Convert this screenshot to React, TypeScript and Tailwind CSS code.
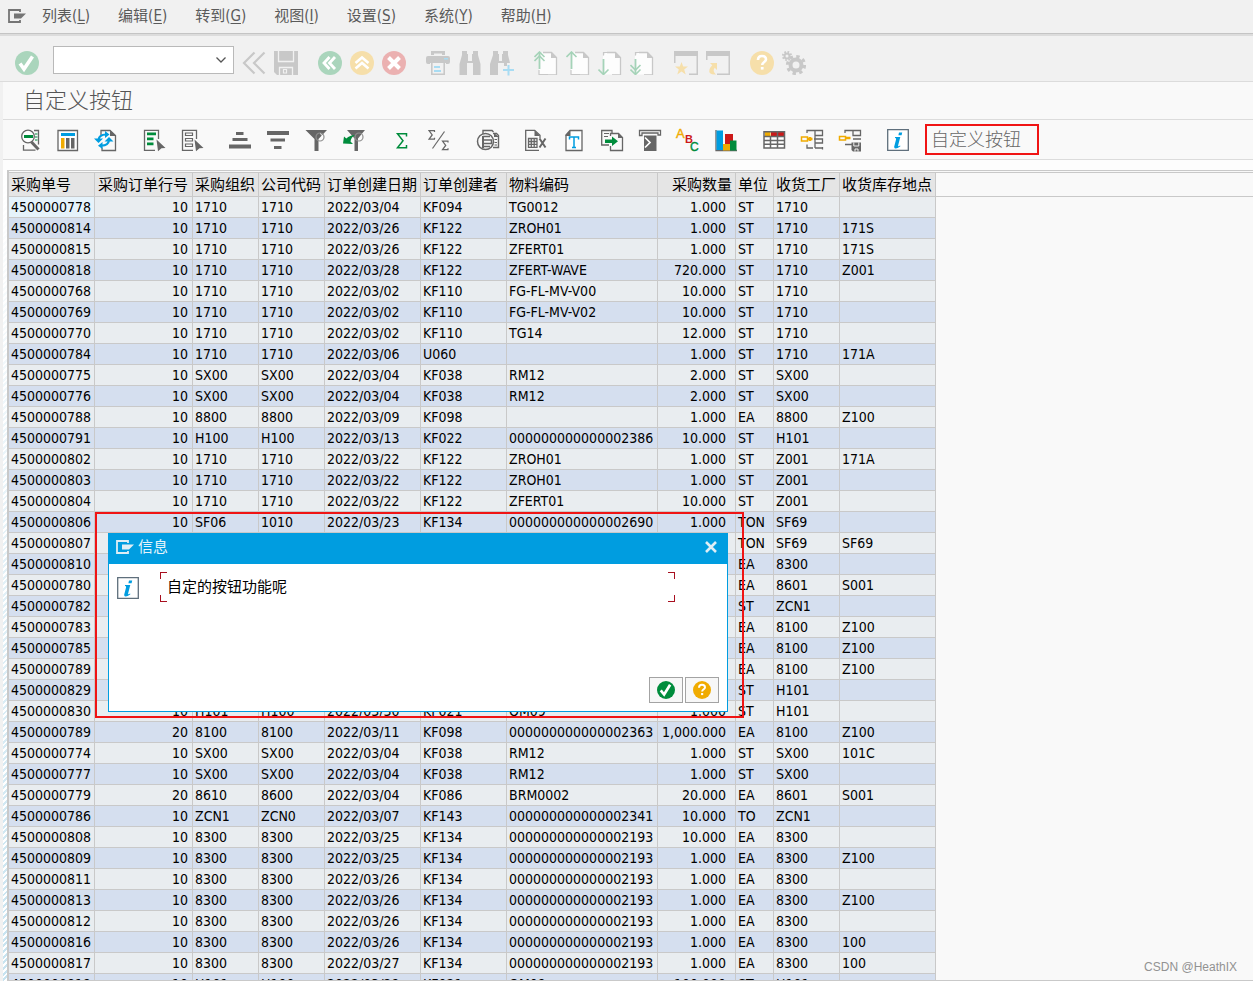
import type { ReactNode } from "react";

const GRAY = "#666666";
const DIM = "#c8c8c8";
const GREEN = "#008c3c";
const BLUE = "#009de0";
const ORANGE = "#f0ab00";

function Svg({ children, className = "size-6" }: { children: ReactNode; className?: string }) {
  return (
    <svg viewBox="0 0 24 24" className={`${className} shrink-0`} fill="none" aria-hidden="true">
      {children}
    </svg>
  );
}

/* ---------- icons of the standard toolbar ---------- */

const checkDim = (
  <Svg>
    <circle cx="12" cy="12" r="12" fill="#aad5bc" />
    <path d="M5 12.5 9 18 17.5 5.5" stroke="#fff" strokeWidth="3.6" />
  </Svg>
);
const rewind = (
  <Svg>
    <path d="M12.5 1.5 2 12l10.500 10.500M22.500 1.500 12 12l10.500 10.500" stroke={DIM} strokeWidth="2.2" />
  </Svg>
);
const save = (
  <Svg>
    <path d="M0 0h24v24H3l-3-3z" fill={DIM} />
    <path d="M4.500 0v10.500h15V0M5.500 24v-7.500h13v7.500" stroke="#f1f1f1" strokeWidth="1.300" />
    <path d="M9.500 18.500h3v3.500h-3z" stroke="#f1f1f1" strokeWidth="1.200" />
  </Svg>
);
const back = (
  <Svg>
    <circle cx="12" cy="12" r="12" fill="#aad5bc" />
    <path d="m11.500 6-5.500 6 5.500 6M17 6l-5.500 6 5.500 6" stroke="#fff" strokeWidth="2.800" />
  </Svg>
);
const exit = (
  <Svg>
    <circle cx="12" cy="12" r="12" fill="#f6dfaa" />
    <path d="m5.500 12 6.500-5.500 6.500 5.500M5.500 17.500 12 12l6.500 5.500" stroke="#fff" strokeWidth="2.600" />
  </Svg>
);
const cancel = (
  <Svg>
    <circle cx="12" cy="12" r="12" fill="#ebb1b1" />
    <path d="m6.500 6.500 11 11m0-11-11 11" stroke="#fff" strokeWidth="4" />
  </Svg>
);
const print = (
  <Svg>
    <path d="M5 4V0h14v4h-3V2.500H8V4z" fill={DIM} />
    <path d="M2 5h20q2 0 2 2v4q0 2-2 2h-2v-1H4v1H2q-2 0-2-2V7q0-2 2-2z" fill={DIM} />
    <path d="M18 7h4v1.500h-4z" fill="#a8dcf3" />
    <path d="M5.800 12v11.200h12.400V12" stroke={DIM} strokeWidth="1.600" />
    <path d="M8 16h6M8 20h7" stroke="#a8dcf3" strokeWidth="1.800" />
  </Svg>
);
const find = (
  <Svg>
    <path d="M4 0h5v3h1v7h4V3h1V0h5v4l2.500 9v11H15V12H9v12H1.500V13L4 4z" fill={DIM} />
  </Svg>
);
const findNext = (
  <Svg className="size-6 overflow-visible">
    <path d="M3 0h5v3h1v7h3V3h1V0h5v4l2 8h-3v3h-3v-3H8v12H0V13l3-9z" fill={DIM} />
    <path d="M18.500 14v10.500M13 19h11" stroke="#a8dcf3" strokeWidth="2" />
  </Svg>
);

function PageIcon({ down = false, twice = false }: { down?: boolean; twice?: boolean }) {
  return (
    <Svg>
      <path d="M8 1.500h10l4.500 4.500v17.500H5V5z" fill="#fdfdfd" />
      <path d="M9 1.500h8.500l5 5v17.500H14" stroke={DIM} strokeWidth="1.300" />
      <path d="M17 1v6h6z" fill={DIM} />
      {down ? (
        <>
          <path d="M5.500 4.500V1.500H9" stroke={DIM} strokeWidth="1.200" />
          <path d="M5.500 8v15" stroke="#a5d3b8" strokeWidth="1.800" />
          <path d={twice ? "m.500 14 5 5 5-5M.500 18.500l5 5 5-5" : "m.500 18.500 5 5 5-5"} stroke="#a5d3b8" strokeWidth="1.600" />
        </>
      ) : (
        <>
          <path d="M5.500 1v17" stroke="#a5d3b8" strokeWidth="1.800" />
          <path d="M5 19v4.500h9" stroke={DIM} strokeWidth="1.200" />
          <path d={twice ? "m.500 6 5-5 5 5M.500 10l5-5 5 5" : "m.500 6 5-5 5 5"} stroke="#a5d3b8" strokeWidth="1.600" />
        </>
      )}
    </Svg>
  );
}

const session = (
  <Svg>
    <path d="M0 0h24v5H1.500v7H0z" fill={DIM} />
    <path d="M24 4v20h-9v-1.500h7.500V4z" fill={DIM} />
    <path d="m7.500 11 1.700 4.500H14l-3.800 3 1.500 5-4.200-3-4.200 3 1.500-5-3.800-3h4.800z" fill="#f6dfaa" />
  </Svg>
);
const shortcut = (
  <Svg>
    <path d="M0 0h24v5H1.500v4H0z" fill={DIM} />
    <path d="M24 4v20H11v-1.500h11.500V4z" fill={DIM} />
    <path d="M4 12h7v7l-2.300-2.300Q6 20 10 23.500 2 24 3.500 18.500q.500-1.800 2.700-4.200z" fill="#f6dfaa" />
  </Svg>
);
const helpDim = (
  <Svg>
    <circle cx="12" cy="12" r="12" fill="#f6dfaa" />
    <path d="M8 9q0-4 4-4t4 3.500c0 2.500-3.800 2.500-3.800 5.500" stroke="#fff" strokeWidth="2.600" />
    <path d="M10.800 16h2.800v2.600h-2.800z" fill="#fff" />
  </Svg>
);
const gears = (
  <Svg>
    <circle cx="14" cy="14" r="5.500" stroke={DIM} strokeWidth="4" />
    <circle cx="14" cy="14" r="8.600" stroke={DIM} strokeWidth="3" strokeDasharray="3.400 3.354" />
    <circle cx="5" cy="5" r="2.500" stroke={DIM} strokeWidth="2" />
    <circle cx="5" cy="5" r="4.200" stroke={DIM} strokeWidth="1.800" strokeDasharray="1.700 1.600" />
  </Svg>
);

/* ---------- icons of the list toolbar ---------- */

const cursorPath = "M14.500 11.500 23.500 20l-4 .2-3.500 3z";
const sigma = "M10 1H1.500L6 7l-4.500 6H10M9.300 1v2M9.300 13v-2";

const details = (
  <Svg>
    <path d="M5.500 17v5.200h12M16 2.500h4.500v14" stroke={GRAY} strokeWidth="1.300" />
    <path d="M17 6h2.500M17 9h2.500M17 12h2.500" stroke={GREEN} strokeWidth="1.200" />
    <circle cx="10" cy="8.500" r="6.300" fill="#fff" stroke={GRAY} strokeWidth="1.300" />
    <path d="M6 8.500h9" stroke={GREEN} strokeWidth="3" />
    <path d="m13.500 14 7 7.500" stroke={GRAY} strokeWidth="3" />
  </Svg>
);
const layoutIcon = (
  <Svg>
    <path d="M2 2.500h19.500v20H2z" fill="#fff" stroke={GRAY} strokeWidth="1.300" />
    <path d="M5 5h14v3H5z" fill={BLUE} />
    <path d="M5 10h3.500v10.500H5z" fill={ORANGE} />
    <path d="M10 10h3.500v10.500H10zM15 10h3.500v10.500H15z" fill={GRAY} />
  </Svg>
);
const refresh = (
  <Svg>
    <path d="M7 7V2.500h9l5.500 5v15H8v-3" stroke={GRAY} strokeWidth="1.300" />
    <path d="M16 2v6h6z" fill={GRAY} />
    <path d="M4.500 12q.500-5.500 7.500-5.500M15 12q-.500 5.500-7.500 5.700" stroke={BLUE} strokeWidth="2.200" />
    <path d="M0 10.500h9L4.500 15zM19.500 13.500h-9L15 9zM11 3l4.500 3.500L11 10z" fill={BLUE} />
    <path d="m8.500 21-4.500-3.300 4.500-3.700z" fill={BLUE} />
  </Svg>
);
const selectAll = (
  <Svg>
    <path d="M13 22.300H2.500v-20h14V11" stroke={GRAY} strokeWidth="1.300" />
    <path d="M5 4.500h9v2.800H5zM5 9.500h6.500v2.800H5zM5 14.500h6.500v2.800H5z" fill={GREEN} />
    <path d={cursorPath} fill={GRAY} />
  </Svg>
);
const deselectAll = (
  <Svg>
    <path d="M13 22.300H2.500v-20h14V11" stroke={GRAY} strokeWidth="1.300" />
    <path d="M5.500 5h7v2.500h-7zM5.500 10.500h7V13h-7zM5.500 16h7v2.500h-7z" stroke={GRAY} strokeWidth="1.200" />
    <path d={cursorPath} fill={GRAY} />
  </Svg>
);
const sortAsc = (
  <Svg>
    <path d="M8 4h7.500v3H8zM4.500 10h15v3h-15zM1 16.500h22v4H1z" fill={GRAY} />
  </Svg>
);
const sortDesc = (
  <Svg>
    <path d="M1 3h22v4H1zM4.500 10.500h14.500v3H4.500zM8 18h7.500v3H8z" fill={GRAY} />
  </Svg>
);
const filter = (
  <Svg>
    <path d="M1.500 2H23l-8.500 9v12h-4V11z" fill={GRAY} />
    <circle cx="16" cy="9" r="4" stroke="#8f8f8f" strokeWidth="1.200" />
    <path d="M16 5.500q3 1 2.500 4.500" stroke="#fff" strokeWidth=".8" />
  </Svg>
);
const filterDelete = (
  <Svg>
    <path d="M5 2h18l-7 8.500V23h-3.500V10.500z" fill={GRAY} />
    <circle cx="17" cy="9" r="4" stroke="#8f8f8f" strokeWidth="1.200" />
    <path d="M1 15.500 2 8.500l2.300 2Q8 7 13 7q-4 2-4.500 6.500l2.500 2.500z" fill={GREEN} />
  </Svg>
);
const sum = (
  <Svg>
    <path d="M16.500 8.500V5.700h-9l5.500 7-5.500 7h9V17" stroke={GREEN} strokeWidth="1.500" />
  </Svg>
);
const subtotal = (
  <Svg>
    <g transform="translate(0 2) scale(.7)">
      <path d={sigma} stroke={GRAY} strokeWidth="1.800" />
    </g>
    <g transform="translate(13.500 12.500) scale(.7)">
      <path d={sigma} stroke={GRAY} strokeWidth="1.800" />
    </g>
    <path d="M16.500 3.500 4.500 20.500" stroke={GRAY} strokeWidth="1.200" />
  </Svg>
);
const preview = (
  <Svg>
    <path d="M7 6V2.500h9l1.500 1.500M17 5.500h3.500l2 2v12H17" stroke={GRAY} strokeWidth="1.400" />
    <path d="M18 5v4h5z" fill={GRAY} />
    <circle cx="9.500" cy="13.500" r="8" fill="#f9f9f9" stroke={GRAY} strokeWidth="1.500" />
    <path d="M7 8v12" stroke={GRAY} strokeWidth="2" />
    <path d="M7 8.500h7M7 18.500h7" stroke={GRAY} strokeWidth="1.500" />
    <path d="M7 12h8.500v3.500H7z" stroke={GRAY} strokeWidth="1.500" />
    <path d="M18.500 11.500H21M18.500 14.500H21M18.500 17H21" stroke={GRAY} strokeWidth="1.200" />
  </Svg>
);
const spreadsheet = (
  <Svg>
    <path d="M15 22.300H1.700v-20h9l5.300 5v3" stroke={GRAY} strokeWidth="1.300" />
    <path d="M10.500 2v6H16z" fill={GRAY} />
    <path d="M4.500 10.500H13v8.800H4.500zM4.500 13.500H13M4.500 16.300H13M7.300 10.500v8.800M10.200 10.500v8.800" stroke={GRAY} strokeWidth="1.300" />
    <path d="m15.500 10.500 6 9M21.500 10.500l-6 9" stroke={GRAY} strokeWidth="2" />
  </Svg>
);
const textDoc = (
  <Svg>
    <path d="M8 2.500h12v20H4V7z" fill="#fff" stroke={GRAY} strokeWidth="1.300" />
    <path d="M3.500 8V7l5-5v6z" fill={GRAY} />
    <path d="M7.500 11.500V9h9v2.500M12 9v10.500M10 19.500h4" stroke={BLUE} strokeWidth="1.500" />
  </Svg>
);
const exportIcon = (
  <Svg>
    <path d="M9 17H1.700V2.500H12v3" stroke={GRAY} strokeWidth="1.300" />
    <path d="M4 5.500h5M4 8.500h4" stroke={GRAY} strokeWidth="1.200" />
    <path d="M10.500 8V5.500h8l4 4v13h-12V18" stroke={GRAY} strokeWidth="1.300" />
    <path d="M18 5v5h5z" fill={GRAY} />
    <path d="M5 11.500h7V8.500l6 4.800-6 4.700v-3H5z" fill={GREEN} />
  </Svg>
);
const abcAnalysis = (
  <Svg>
    <path d="M1.500 2.500h21V7H20V5H4v2.500H1.500z" fill="#fff" stroke={GRAY} strokeWidth="1.300" />
    <path d="M6 7.500h12.500V23H6z" fill={GRAY} />
    <path d="M7 9.500 12 14.500 7 19.500" stroke="#fff" strokeWidth="1.700" />
  </Svg>
);
const abc = (
  <Svg className="size-6 overflow-visible">
    <g fontFamily="Liberation Sans, sans-serif">
      <text x="0" y="10" fontSize="13" fill={ORANGE} stroke={ORANGE} strokeWidth=".4">A</text>
      <text x="9" y="15" fontSize="11" fill="#cc1919" fontWeight="bold">B</text>
      <text x="14" y="23" fontSize="12" fill={GREEN} stroke={GREEN} strokeWidth=".4">C</text>
    </g>
  </Svg>
);
const chart = (
  <Svg>
    <path d="M2 2v20.500h21" stroke={GRAY} strokeWidth="1.300" />
    <path d="M2.500 2.500H9V22H2.500z" fill={BLUE} />
    <path d="M11 6h8v10h-8z" fill="#cc1919" />
    <path d="M9 16h7v6.500H9z" fill={ORANGE} />
    <path d="M16 12.500h6.500v10H16z" fill={GREEN} />
  </Svg>
);
const grid = (
  <Svg>
    <path d="M1.500 3.500h21v16.500h-21z" fill="#fff" />
    <path d="M3 4h5.500v4H3z" fill={ORANGE} />
    <path d="M9 4h13v4H9z" fill="#cc1919" />
    <path d="M2 3.700h20.500V20H2zM2 8.500h20.500M2 12.500h20.500M2 16.300h20.500M8.500 8v12M15.500 3.500V20" stroke={GRAY} strokeWidth="1.500" />
  </Svg>
);
const tree = (
  <Svg>
    <path d="M1.500 9h6v4h-6z" stroke={ORANGE} strokeWidth="1.500" />
    <path d="M7.500 11h5M10 9v4" stroke={ORANGE} strokeWidth="2.500" />
    <path d="M7 5V2.500h15.500v5H15v-5M15 7.500V20M14 11h8.500v4H15M15 20h7.500M22.500 19v2.500M7 16.500V20h6" stroke={GRAY} strokeWidth="1.300" />
  </Svg>
);
const treeSave = (
  <Svg>
    <path d="M1.500 8.500h6v3.500h-6z" stroke={ORANGE} strokeWidth="1.500" />
    <path d="M7.500 10h5" stroke={ORANGE} strokeWidth="2.500" />
    <path d="M7 5V2.500h15.500v5H15V2.500M15 11h8M7 16.500h7" stroke={GRAY} strokeWidth="1.300" />
    <path d="M13.500 14.500h9.500v9h-8l-1.500-1.500z" fill={GRAY} />
    <path d="M15.800 14.500v3.500h5v-3.500M17 23.500v-2.500h3v2.500" stroke="#fff" strokeWidth=".9" />
  </Svg>
);
const info = (
  <Svg>
    <path d="M1.700 1.700h20.600v20.600H1.700z" fill="#fff" stroke="#5f6f7c" strokeWidth="1.300" />
    <path d="M13 4.500h3.200l-.6 2.800h-3.200zM9 9h5.300l-2.200 8.600q-.2 1 .6.700l1.400-.8.300.7q-5.500 4.200-6.300.8l2-7.800q.2-1.200-1.100-1.200z" fill={BLUE} />
  </Svg>
);

function SapMenuIcon({ color }: { color: string }) {
  return (
    <svg viewBox="0 0 18 14" className="h-3.5 w-[18px] shrink-0" fill="none" aria-hidden="true">
      <path d="M12 3V1H1v12h11v-2" stroke={color} strokeWidth="1.800" />
      <path d="M6 4.500h12l-5 5H6z" fill={color} />
    </svg>
  );
}

/* ---------- toolbar data ---------- */

type Tool = [label: string, icon: ReactNode];

const standardGroups: Tool[][] = [
  [["返回", back], ["退出", exit], ["取消", cancel]],
  [["打印", print], ["查找", find], ["查找下一个", findNext]],
  [
    ["第一页", <PageIcon twice />],
    ["上一页", <PageIcon />],
    ["下一页", <PageIcon down />],
    ["最后一页", <PageIcon down twice />],
  ],
  [["创建会话", session], ["创建快捷方式", shortcut]],
  [["帮助", helpDim], ["定制布局", gears]],
];

const listGroups: Tool[][] = [
  [["明细", details], ["布局", layoutIcon], ["刷新", refresh]],
  [["全选", selectAll], ["取消全选", deselectAll]],
  [["升序排序", sortAsc], ["降序排序", sortDesc], ["设置过滤器", filter], ["删除过滤器", filterDelete]],
  [["总计", sum], ["小计", subtotal]],
  [["打印预览", preview]],
  [
    ["电子表格", spreadsheet],
    ["字处理", textDoc],
    ["本地文件", exportIcon],
    ["邮件收件人", abcAnalysis],
    ["ABC 分析", abc],
    ["图形", chart],
  ],
  [["更改布局", grid], ["选择布局", tree], ["保存布局", treeSave]],
  [["信息", info]],
];

const menus = [
  ["列表", "L"],
  ["编辑", "E"],
  ["转到", "G"],
  ["视图", "I"],
  ["设置", "S"],
  ["系统", "Y"],
  ["帮助", "H"],
];

/* ---------- list data ---------- */

const columns = [
  { title: "采购单号", width: "w-[86px]" },
  { title: "采购订单行号", width: "w-[98px]", cell: "text-right pr-1", head: "text-right pr-1" },
  { title: "采购组织", width: "w-[66px]" },
  { title: "公司代码", width: "w-[66px]" },
  { title: "订单创建日期", width: "w-[96px]" },
  { title: "订单创建者", width: "w-[86px]" },
  { title: "物料编码", width: "w-[151px]" },
  { title: "采购数量", width: "w-[78px]", cell: "text-right pr-[9px]", head: "text-right pr-[3px]" },
  { title: "单位", width: "w-[38px]" },
  { title: "收货工厂", width: "w-[66px]" },
  { title: "收货库存地点", width: "w-[96px]" },
];

const rows = `4500000778|10|1710|1710|2022/03/04|KF094|TG0012|1.000|ST|1710|
4500000814|10|1710|1710|2022/03/26|KF122|ZROH01|1.000|ST|1710|171S
4500000815|10|1710|1710|2022/03/26|KF122|ZFERT01|1.000|ST|1710|171S
4500000818|10|1710|1710|2022/03/28|KF122|ZFERT-WAVE|720.000|ST|1710|Z001
4500000768|10|1710|1710|2022/03/02|KF110|FG-FL-MV-V00|10.000|ST|1710|
4500000769|10|1710|1710|2022/03/02|KF110|FG-FL-MV-V02|10.000|ST|1710|
4500000770|10|1710|1710|2022/03/02|KF110|TG14|12.000|ST|1710|
4500000784|10|1710|1710|2022/03/06|U060||1.000|ST|1710|171A
4500000775|10|SX00|SX00|2022/03/04|KF038|RM12|2.000|ST|SX00|
4500000776|10|SX00|SX00|2022/03/04|KF038|RM12|2.000|ST|SX00|
4500000788|10|8800|8800|2022/03/09|KF098||1.000|EA|8800|Z100
4500000791|10|H100|H100|2022/03/13|KF022|000000000000002386|10.000|ST|H101|
4500000802|10|1710|1710|2022/03/22|KF122|ZROH01|1.000|ST|Z001|171A
4500000803|10|1710|1710|2022/03/22|KF122|ZROH01|1.000|ST|Z001|
4500000804|10|1710|1710|2022/03/22|KF122|ZFERT01|10.000|ST|Z001|
4500000806|10|SF06|1010|2022/03/23|KF134|000000000000002690|1.000|TON|SF69|
4500000807||||||||TON|SF69|SF69
4500000810||||||||EA|8300|
4500000780||||||||EA|8601|S001
4500000782||||||||ST|ZCN1|
4500000783||||||||EA|8100|Z100
4500000785||||||||EA|8100|Z100
4500000789||||||||EA|8100|Z100
4500000829||||||||ST|H101|
4500000830|10|H101|H100|2022/03/30|KF021|QM09|1.000|ST|H101|
4500000789|20|8100|8100|2022/03/11|KF098|000000000000002363|1,000.000|EA|8100|Z100
4500000774|10|SX00|SX00|2022/03/04|KF038|RM12|1.000|ST|SX00|101C
4500000777|10|SX00|SX00|2022/03/04|KF038|RM12|1.000|ST|SX00|
4500000779|20|8610|8600|2022/03/04|KF086|BRM0002|20.000|EA|8601|S001
4500000786|10|ZCN1|ZCN0|2022/03/07|KF143|000000000000002341|10.000|TO|ZCN1|
4500000808|10|8300|8300|2022/03/25|KF134|000000000000002193|10.000|EA|8300|
4500000809|10|8300|8300|2022/03/25|KF134|000000000000002193|1.000|EA|8300|Z100
4500000811|10|8300|8300|2022/03/26|KF134|000000000000002193|1.000|EA|8300|
4500000813|10|8300|8300|2022/03/26|KF134|000000000000002193|1.000|EA|8300|Z100
4500000812|10|8300|8300|2022/03/26|KF134|000000000000002193|1.000|EA|8300|
4500000816|10|8300|8300|2022/03/26|KF134|000000000000002193|1.000|EA|8300|100
4500000817|10|8300|8300|2022/03/27|KF134|000000000000002193|1.000|EA|8300|100
4500000819|10|H101|H100|2022/03/29|KF021|QM09|100.000|ST|H101|`
  .split("\n")
  .map((line) => line.split("|"));

/* Rows behind the dialog carry one separator per hidden column. */
const cellsOf = (row: string[]) => row.slice(0, 1).concat(row.slice(row.length - columns.length + 1));

function MenuBar() {
  return (
    <nav className="flex h-9 shrink-0 items-center gap-7 border-b-2 border-[#dcdcdc] bg-[#f1f1f1] pl-2 text-[15px] text-[#5a5a5a] shadow-[inset_0_-1px_0_#c4c4c4]">
      <button aria-label="系统菜单" className="-mr-3 pb-0.5">
        <SapMenuIcon color="#757575" />
      </button>
      {menus.map(([name, key]) => (
        <button key={key} className="pb-0.5 whitespace-nowrap">
          {name}(<span className="underline underline-offset-2">{key}</span>)
        </button>
      ))}
    </nav>
  );
}

function StandardToolbar() {
  return (
    <div className="flex h-[46px] shrink-0 items-center border-b border-[#dcdcdc] bg-[#f1f1f1] pt-2 pl-[11px]">
      <button aria-label="回车" className="flex w-8 justify-center">{checkDim}</button>
      <div className="mb-1.5 ml-2.5 flex h-7 w-[181px] items-center border border-[#b9b9b9] bg-white">
        <input aria-label="命令" className="h-full min-w-0 flex-1 px-1 text-sm outline-none" />
        <button aria-label="命令历史" className="flex w-6 justify-center">
          <svg viewBox="0 0 12 8" className="h-2 w-3" fill="none" aria-hidden="true">
            <path d="m1.500 1.500 4.500 4.500 4.500-4.500" stroke="#555" strokeWidth="1.300" />
          </svg>
        </button>
      </div>
      <div className="ml-1 flex">
        <button aria-label="隐藏命令" className="flex w-8 justify-center">{rewind}</button>
        <button aria-label="保存" className="flex w-8 justify-center">{save}</button>
      </div>
      {standardGroups.map((group, i) => (
        <div key={i} className="ml-3 flex">
          {group.map(([label, icon]) => (
            <button key={label} aria-label={label} className="flex w-8 justify-center">
              {icon}
            </button>
          ))}
        </div>
      ))}
    </div>
  );
}

function ListToolbar() {
  return (
    <div className="flex h-10 shrink-0 items-center border-b border-[#dcdcdc] pl-2">
      <div className="flex items-center gap-2.5">
        {listGroups.map((group, i) => (
          <div key={i} className="flex items-center">
            {group.map(([label, icon]) => (
              <button key={label} aria-label={label} className="flex w-[38px] justify-center">
                {icon}
              </button>
            ))}
          </div>
        ))}
      </div>
      <button className="ml-2 h-[31px] border-2 border-[#f01414] pr-4 pl-1 text-lg leading-none font-light whitespace-nowrap text-[#666]">
        自定义按钮
      </button>
    </div>
  );
}

function OrderTable() {
  return (
    <table className="w-[927px] shrink-0 table-fixed border-separate border-spacing-0 text-black">
      <thead>
        <tr>
          {columns.map((c) => (
            <th
              key={c.title}
              scope="col"
              className={`h-[25px] overflow-hidden border-y border-r border-[#c9c9c9] bg-[#e5e5e5] p-0 pl-0.5 text-[15px] leading-[22px] font-normal whitespace-nowrap ${c.width} ${c.head ?? "text-left"}`}
            >
              {c.title}
            </th>
          ))}
        </tr>
      </thead>
      <tbody>
        {rows.map((row, r) => (
          <tr key={r} className={r % 2 ? "bg-[#d5dfef]" : "bg-[#e9edf0]"}>
            {cellsOf(row).map((value, c) => (
              <td
                key={c}
                className={`h-[21px] overflow-hidden border-r border-b border-[#c9c9c9] p-0 pl-0.5 text-sm leading-5 whitespace-nowrap ${columns[c].cell ?? ""} ${r === 0 && c === 0 ? "bg-[#e6f3fb]" : ""}`}
              >
                {value}
              </td>
            ))}
          </tr>
        ))}
      </tbody>
    </table>
  );
}

function InfoDialog() {
  return (
    <div className="absolute top-[512px] left-[95px] h-[206px] w-[649px] border-2 border-[#f01414]">
      <section
        role="dialog"
        aria-label="信息"
        className="mt-[19px] ml-[11px] flex h-[179px] w-[620px] flex-col border border-[#009de0] bg-white"
      >
        <header className="flex h-[30px] shrink-0 items-center bg-[#009de0] pr-2 pb-1 pl-[7px] text-[15px] text-[#e6f4fb]">
          <SapMenuIcon color="#dfeef5" />
          <h2 className="ml-1 flex-1">信息</h2>
          <button aria-label="关闭" className="flex size-4 items-center justify-center">
            <svg viewBox="0 0 12 12" className="size-3" aria-hidden="true">
              <path d="m1 1 10 10M11 1 1 11" stroke="#dfeef5" strokeWidth="2.600" />
            </svg>
          </button>
        </header>
        <div className="flex flex-1 items-start pt-2 pl-[7px]">
          <span className="mt-1 flex">{info}</span>
          <div className="ml-5 flex h-[30px] w-[515px] items-stretch justify-between">
            <span className="flex w-[7px] flex-col justify-between">
              <i className="h-[7px] border-t border-l border-[#a80f1f]" />
              <i className="h-[7px] border-b border-l border-[#a80f1f]" />
            </span>
            <p className="flex flex-1 items-center text-[15px] text-black">自定的按钮功能呢</p>
            <span className="flex w-[7px] flex-col justify-between">
              <i className="h-[7px] border-t border-r border-[#a80f1f]" />
              <i className="h-[7px] border-r border-b border-[#a80f1f]" />
            </span>
          </div>
        </div>
        <footer className="flex justify-end gap-0.5 pr-2 pb-2">
          <button aria-label="继续" className="flex h-[26px] w-[34px] items-center justify-center border border-[#a3a3a3] bg-[#f7f7f7]">
            <Svg className="size-[18px]">
              <circle cx="12" cy="12" r="12" fill={GREEN} />
              <path d="M5 12.500 9.500 18 17.500 5" stroke="#fff" strokeWidth="3.600" />
            </Svg>
          </button>
          <button aria-label="帮助" className="flex h-[26px] w-[34px] items-center justify-center border border-[#a3a3a3] bg-[#f7f7f7]">
            <Svg className="size-[18px]">
              <circle cx="12" cy="12" r="12" fill={ORANGE} />
              <path d="M8 9q0-4 4-4t4 3.500c0 2.500-3.800 2.500-3.800 5.500" stroke="#fff" strokeWidth="2.600" />
              <path d="M10.800 16h2.800v2.800h-2.800z" fill="#fff" />
            </Svg>
          </button>
        </footer>
      </section>
    </div>
  );
}

export default function App() {
  return (
    <div className="relative flex h-screen flex-col overflow-hidden bg-[#f1f1f1] font-['DejaVu_Sans_Condensed','Noto_Sans_CJK_SC',sans-serif]">
      <MenuBar />
      <StandardToolbar />
      <main className="ml-[3px] flex min-h-0 flex-1 flex-col bg-[#f9f9f9]">
        <h1 className="flex h-[38px] shrink-0 items-center border-b border-[#dcdcdc] pl-5 text-[22px] font-light text-[#555]">
          自定义按钮
        </h1>
        <ListToolbar />
        <div className="h-2.5 shrink-0 bg-[#fdfdfd]" />
        <div className="flex min-h-0 flex-1">
          <div className="w-1 shrink-0 bg-[linear-gradient(to_bottom,#ffffff,#ffffff33),repeating-linear-gradient(135deg,#b9dcec_0px,#b9dcec_2px,#ffffff_2px,#ffffff_4px)]" />
          <div className="flex min-w-0 flex-1 items-start overflow-hidden border-t border-b border-l-2 border-[#c9c9c9] pt-px">
            <OrderTable />
            <div className="h-[25px] flex-1 border-y border-[#c9c9c9]" />
          </div>
        </div>
      </main>
      <InfoDialog />
      <span className="absolute right-4 bottom-1.5 text-xs leading-4 text-[#929292] font-['Liberation_Sans',sans-serif]">
        CSDN @HeathIX
      </span>
    </div>
  );
}
